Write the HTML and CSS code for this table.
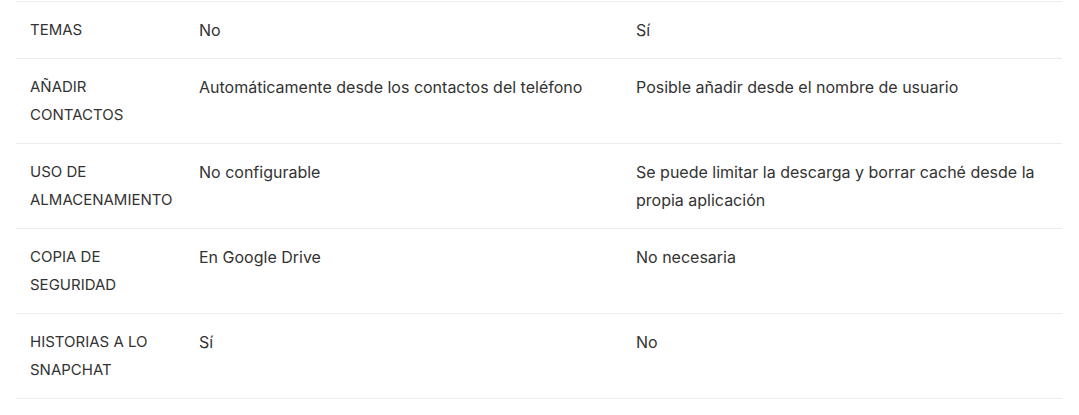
FILE: index.html
```html
<!DOCTYPE html>
<html lang="es">
<head>
    <meta charset="UTF-8">
    <title>Comparativa</title>
    <link rel="stylesheet" href="styles.css">
</head>
<body>

    <!-- Tabla comparativa -->
    <table class="compare">
        <colgroup>
            <col class="col-label">
            <col class="col-a">
            <col class="col-b">
        </colgroup>
        <tr>
            <td class="label">TEMAS</td>
            <td>No</td>
            <td>Sí</td>
        </tr>
        <tr>
            <td class="label">AÑADIR CONTACTOS</td>
            <td>Automáticamente desde los contactos del teléfono</td>
            <td>Posible añadir desde el nombre de usuario</td>
        </tr>
        <tr>
            <td class="label">USO DE ALMACENAMIENTO</td>
            <td>No configurable</td>
            <td>Se puede limitar la descarga y borrar caché desde la propia aplicación</td>
        </tr>
        <tr>
            <td class="label">COPIA DE SEGURIDAD</td>
            <td>En Google Drive</td>
            <td>No necesaria</td>
        </tr>
        <tr>
            <td class="label">HISTORIAS A LO SNAPCHAT</td>
            <td>Sí</td>
            <td>No</td>
        </tr>
    </table>

</body>
</html>
```

FILE: styles.css
```css
/* General Styles */
body {
    font-family: 'Inter', sans-serif;
    background-color: #fff;
    color: #333;
    margin: 0;
    padding: 1px 17px 0 16px;
}

/* Table */
.compare {
    width: 100%;
    table-layout: fixed;
    border-collapse: collapse;
    font-size: 16px;
    line-height: 28px;
}

.col-label {
    width: 169px;
}

.col-a {
    width: 437px;
}

.compare td {
    vertical-align: top;
    padding: 14px;
    border-top: 1px solid #ececec;
    border-bottom: 1px solid #ececec;
}

.compare td.label {
    font-size: 15px;
}
```
